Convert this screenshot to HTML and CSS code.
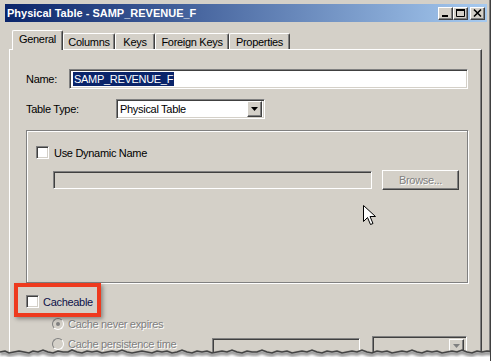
FILE: index.html
```html
<!DOCTYPE html>
<html lang="en">
  <head>
    <meta charset="utf-8" />
    <title>Physical Table - SAMP_REVENUE_F</title>
    <link rel="stylesheet" href="styles.css">
  </head>
  <body>
    <div class="window">
      <!-- Title bar -->
      <div class="titlebar">
        <span class="title">Physical Table - SAMP_REVENUE_F</span>
        <div class="caption-buttons">
          <span class="cap-btn">
            <svg width="13" height="11" viewBox="0 0 13 11"><rect x="3" y="7" width="6" height="2" fill="#000"/></svg>
          </span>
          <span class="cap-btn">
            <svg width="13" height="11" viewBox="0 0 13 11"><path d="M2.5 1.5h8v7h-8z" fill="none" stroke="#000"/><rect x="2" y="1" width="9" height="2" fill="#000"/></svg>
          </span>
          <span class="cap-btn close">
            <svg width="13" height="11" viewBox="0 0 13 11"><path d="M3 1.5l7 7M10 1.5l-7 7" stroke="#000" stroke-width="1.6"/></svg>
          </span>
        </div>
      </div>

      <!-- Tabs -->
      <div class="tabs">
        <div class="tab active">General</div>
        <div class="tab">Columns</div>
        <div class="tab">Keys</div>
        <div class="tab">Foreign Keys</div>
        <div class="tab">Properties</div>
      </div>

      <!-- General tab page -->
      <div class="panel">
        <div class="form-row">
          <span class="label name-label">Name:</span>
          <div class="field name-field"><span class="selected">SAMP_REVENUE_F</span></div>
        </div>

        <div class="form-row type-row">
          <span class="label type-label">Table Type:</span>
          <div class="field select">
            <span class="select-text">Physical Table</span>
            <span class="drop-btn"><svg width="7" height="4" viewBox="0 0 7 4"><path d="M0 0h7L3.5 4z" fill="#000"/></svg></span>
          </div>
        </div>

        <div class="group">
          <div class="check-row">
            <span class="checkbox"></span>
            <span>Use Dynamic Name</span>
          </div>
          <div class="browse-row">
            <div class="field disabled-field"></div>
            <div class="button disabled">Browse...</div>
          </div>
        </div>

        <div class="check-row cache-row">
          <span class="checkbox"></span>
          <span class="cache-label">Cacheable</span>
        </div>
        <div class="radio-row first">
          <span class="radio checked"></span>
          <span class="disabled-text">Cache never expires</span>
        </div>
        <div class="radio-row second">
          <div class="radio-option">
            <span class="radio"></span>
            <span class="disabled-text">Cache persistence time</span>
          </div>
          <div class="field time-field"></div>
          <div class="field unit-field">
            <span class="drop-btn faded"><svg width="7" height="4" viewBox="0 0 7 4"><path d="M0 0h7L3.5 4z" fill="#808080"/></svg></span>
          </div>
        </div>
      </div>

      <!-- Annotation and pointer drawn over the dialog -->
      <div class="highlight"></div>
      <svg class="pointer" width="13" height="21" viewBox="0 0 13 21">
        <path d="M0.5 0.5v16l4-4 3 7 2.5-1-3-7h5.5z" fill="#fff" stroke="#000"/>
      </svg>

      <svg class="torn" width="494" height="16" viewBox="0 0 494 16">
        <defs>
          <filter id="soft" x="-5%" y="-50%" width="110%" height="200%">
            <feGaussianBlur stdDeviation="1.6"/>
          </filter>
        </defs>
        <path d="M0 7L5 6L9 8L14 7L19 6L24 7L29 8L33 6L38 7L43 5L48 7L53 8L58 6L63 7L68 7L72 5L77 7L82 8L87 6L92 7L97 6L102 8L107 7L112 6L117 7L122 5L127 7L132 8L137 7L142 6L147 7L152 8L157 6L162 7L167 6L172 8L177 7L182 5L187 7L192 8L197 6L202 7L207 6L212 8L217 7L222 6L227 7L232 5L237 7L242 8L247 6L252 7L257 7L262 5L267 7L272 8L277 6L282 7L287 6L292 8L297 7L302 6L307 7L312 5L317 7L322 8L327 6L332 7L337 6L342 8L347 7L352 6L357 7L362 5L367 7L372 8L377 6L382 7L387 6L392 8L397 7L402 6L407 7L412 5L417 7L422 8L427 6L432 7L437 6L442 8L447 7L452 6L457 7L462 5L467 7L472 8L477 6L482 7L487 6L494 7V16H0Z" fill="#fff"/>
        <path transform="translate(0 2)" d="M0 7L5 6L9 8L14 7L19 6L24 7L29 8L33 6L38 7L43 5L48 7L53 8L58 6L63 7L68 7L72 5L77 7L82 8L87 6L92 7L97 6L102 8L107 7L112 6L117 7L122 5L127 7L132 8L137 7L142 6L147 7L152 8L157 6L162 7L167 6L172 8L177 7L182 5L187 7L192 8L197 6L202 7L207 6L212 8L217 7L222 6L227 7L232 5L237 7L242 8L247 6L252 7L257 7L262 5L267 7L272 8L277 6L282 7L287 6L292 8L297 7L302 6L307 7L312 5L317 7L322 8L327 6L332 7L337 6L342 8L347 7L352 6L357 7L362 5L367 7L372 8L377 6L382 7L387 6L392 8L397 7L402 6L407 7L412 5L417 7L422 8L427 6L432 7L437 6L442 8L447 7L452 6L457 7L462 5L467 7L472 8L477 6L482 7L487 6L494 7" fill="none" stroke="#777" stroke-width="3" filter="url(#soft)"/>
        <path d="M0 7L5 6L9 8L14 7L19 6L24 7L29 8L33 6L38 7L43 5L48 7L53 8L58 6L63 7L68 7L72 5L77 7L82 8L87 6L92 7L97 6L102 8L107 7L112 6L117 7L122 5L127 7L132 8L137 7L142 6L147 7L152 8L157 6L162 7L167 6L172 8L177 7L182 5L187 7L192 8L197 6L202 7L207 6L212 8L217 7L222 6L227 7L232 5L237 7L242 8L247 6L252 7L257 7L262 5L267 7L272 8L277 6L282 7L287 6L292 8L297 7L302 6L307 7L312 5L317 7L322 8L327 6L332 7L337 6L342 8L347 7L352 6L357 7L362 5L367 7L372 8L377 6L382 7L387 6L392 8L397 7L402 6L407 7L412 5L417 7L422 8L427 6L432 7L437 6L442 8L447 7L452 6L457 7L462 5L467 7L472 8L477 6L482 7L487 6L494 7" fill="none" stroke="#444" stroke-width="1.6"/>
      </svg>
    </div>
  </body>
</html>
```

FILE: styles.css
```css
/* Page and dialog frame */
body {
  margin: 0;
  background: #fff;
  font-family: "Liberation Sans", Arial, sans-serif;
  font-size: 11px;
  letter-spacing: -0.3px;
  color: #000;
}

.window {
  position: relative;
  width: 490px;
  height: 361px;
  overflow: hidden;
  background: #d4d0c8;
  border-right: 1px solid #404040;
  box-shadow: inset -1px 0 #808080;
}

/* Title bar with blue gradient */
.titlebar {
  display: flex;
  align-items: center;
  height: 18px;
  margin: 4px 0 0 5px;
  width: 482px;
  padding: 0 2px;
  box-sizing: border-box;
  background: linear-gradient(to right, #0a246a, #a6caf0);
}
.title {
  color: #fff;
  font-weight: bold;
  font-size: 11px;
  letter-spacing: 0;
}
.caption-buttons {
  display: flex;
  margin-left: auto;
}
.cap-btn {
  display: flex;
  width: 15px;
  height: 13px;
  box-sizing: border-box;
  background: #d4d0c8;
  border: 1px solid;
  border-color: #fff #404040 #404040 #fff;
  box-shadow: inset -1px -1px #808080;
}
.cap-btn.close {
  margin-left: 2px;
}

/* Tab strip */
.tabs {
  display: flex;
  align-items: flex-end;
  height: 20px;
  margin: 8px 0 -1px 12px;
  position: relative;
  z-index: 1;
}
.tab {
  height: 16px;
  margin-bottom: 1px;
  box-sizing: border-box;
  border: 1px solid;
  border-color: #fff #404040 transparent #fff;
  border-bottom: none;
  border-radius: 2px 2px 0 0;
  box-shadow: inset -1px 0 #808080;
  background: #d4d0c8;
  display: flex;
  align-items: center;
  justify-content: center;
}
.tab.active {
  height: 20px;
  margin-bottom: 0;
  padding-bottom: 3px;
}
.tab:nth-child(1) { width: 51px; }
.tab:nth-child(2) { width: 52px; }
.tab:nth-child(3) { width: 40px; }
.tab:nth-child(4) { width: 74px; }
.tab:nth-child(5) { width: 61px; }

/* Tab page */
.panel {
  margin-left: 9px;
  width: 473px;
  height: 320px;
  box-sizing: border-box;
  padding: 19px 0 0 16px;
  border-top: 1px solid #fff;
  border-left: 1px solid #fff;
  border-right: 1px solid #404040;
  box-shadow: inset -1px 0 #808080;
}

.form-row {
  display: flex;
  align-items: center;
}
.type-row {
  margin-top: 10px;
}
.name-label { width: 43px; }
.type-label { width: 90px; }

/* Sunken edit fields */
.field {
  box-sizing: border-box;
  background: #fff;
  border: 1px solid;
  border-color: #808080 #fff #fff #808080;
  box-shadow: inset 1px 1px #404040, inset -1px -1px #d4d0c8;
}
.name-field {
  width: 399px;
  height: 20px;
  padding: 2px 0 0 3px;
}
.selected {
  display: inline-block;
  background: #0a246a;
  color: #fff;
  height: 14px;
  line-height: 14px;
  padding: 0 1px;
}

.select {
  display: flex;
  align-items: center;
  width: 149px;
  height: 20px;
  padding: 0 2px 0 3px;
}
.select-text {
  flex: 1;
}
.drop-btn {
  display: flex;
  align-items: center;
  justify-content: center;
  width: 15px;
  height: 16px;
  box-sizing: border-box;
  background: #d4d0c8;
  border: 1px solid;
  border-color: #fff #404040 #404040 #fff;
  box-shadow: inset -1px -1px #808080;
}

/* Etched group box */
.group {
  margin-top: 11px;
  width: 442px;
  height: 153px;
  box-sizing: border-box;
  padding: 15px 0 0 9px;
  border: 1px solid #808080;
  box-shadow: inset 1px 1px #fff, 1px 1px #fff;
}

.check-row {
  display: flex;
  align-items: center;
  gap: 5px;
  height: 13px;
}
.checkbox {
  width: 13px;
  height: 13px;
  box-sizing: border-box;
  background: #fff;
  border: 1px solid;
  border-color: #808080 #fff #fff #808080;
  box-shadow: inset 1px 1px #404040, inset -1px -1px #d4d0c8;
}

.browse-row {
  display: flex;
  align-items: center;
  gap: 10px;
  margin: 11px 0 0 17px;
  height: 20px;
}
.disabled-field {
  width: 319px;
  height: 18px;
  background: #d4d0c8;
}
.button {
  width: 77px;
  height: 20px;
  box-sizing: border-box;
  display: flex;
  align-items: center;
  justify-content: center;
  border: 1px solid;
  border-color: #fff #404040 #404040 #fff;
  box-shadow: inset -1px -1px #808080;
}
.disabled,
.disabled-text {
  color: #808080;
  text-shadow: 1px 1px #fff;
}

/* Caching options */
.cache-row {
  margin-top: 12px;
  gap: 4px;
}
.cache-label {
  color: #0c1048;
}
.radio-row {
  display: flex;
  align-items: center;
  margin-left: 26px;
}
.radio-row.first {
  margin-top: 10px;
  height: 12px;
  gap: 4px;
}
.radio-row.second {
  margin-top: 8px;
  align-items: flex-start;
}
.radio-option {
  display: flex;
  align-items: center;
  gap: 4px;
  width: 160px;
  height: 12px;
}
.radio {
  position: relative;
  width: 12px;
  height: 12px;
  box-sizing: border-box;
  border-radius: 50%;
  background: #d4d0c8;
  border: 1px solid;
  border-color: #808080 #fff #fff #808080;
}
.radio.checked::after {
  content: "";
  position: absolute;
  left: 3px;
  top: 3px;
  width: 4px;
  height: 4px;
  border-radius: 50%;
  background: #808080;
}
.time-field {
  width: 148px;
  height: 20px;
  background: #d4d0c8;
}
.unit-field {
  width: 95px;
  height: 20px;
  margin: -2px 0 0 12px;
  background: #d4d0c8;
  display: flex;
  justify-content: flex-end;
  padding: 2px;
}
.drop-btn.faded {
  height: 14px;
}

/* Red call-out around the Cacheable option */
.highlight {
  position: absolute;
  left: 14px;
  top: 283px;
  width: 87px;
  height: 34px;
  box-sizing: border-box;
  border: 4px solid #ee3a1e;
  box-shadow: 2px 2px 4px rgba(0, 0, 0, 0.35);
}

.pointer {
  position: absolute;
  left: 363px;
  top: 205px;
}

/* Torn paper edge at the bottom */
.torn {
  position: absolute;
  left: 0;
  bottom: 0;
}
```
